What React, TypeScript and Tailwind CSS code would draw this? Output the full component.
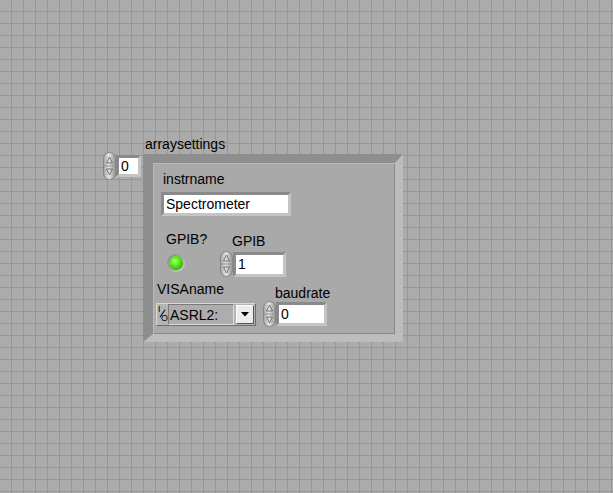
import type { ReactNode } from "react";

// LabVIEW-style front panel: an array of clusters with instrument settings.

const FONT = "font-['Liberation_Sans',Arial,sans-serif] text-[14px] leading-[16px] text-black";

function Spinner({ h = 26 }: { h?: number }) {
  const m = h / 2;
  return (
    <svg width={13} height={h} viewBox={`0 0 13 ${h}`} className="block shrink-0">
      <defs>
        <linearGradient id="spinfill" x1="0" x2="1" y1="0" y2="0">
          <stop offset="0" stopColor="#a0a0a0" />
          <stop offset="0.45" stopColor="#e6e6e6" />
          <stop offset="1" stopColor="#929292" />
        </linearGradient>
      </defs>
      <rect x="0.5" y="0.5" width="12" height={h - 1} rx="6" fill="url(#spinfill)" stroke="#858585" />
      <line x1="1.5" x2="11.5" y1={m} y2={m} stroke="#909090" />
      <path d={`M6.5 ${m - 9} L9.5 ${m - 3} L3.5 ${m - 3} Z`} fill="none" stroke="#727272" />
      <path d={`M6.5 ${m + 9} L9.5 ${m + 3} L3.5 ${m + 3} Z`} fill="none" stroke="#727272" />
    </svg>
  );
}

function Sunken({ className, children }: { className: string; children: ReactNode }) {
  return (
    <div
      className={`flex items-center border-[3px] border-t-[#8a8a8a] border-l-[#8a8a8a] border-r-[#c4c4c4] border-b-[#c4c4c4] bg-white pl-[2px] ${className}`}
    >
      <div className="w-full h-full bg-white flex items-center">{children}</div>
    </div>
  );
}

function Led() {
  return (
    <svg width={18} height={18} viewBox="0 0 18 18" className="block">
      <defs>
        <linearGradient id="ledring" x1="0" y1="0" x2="1" y2="1">
          <stop offset="0" stopColor="#808080" />
          <stop offset="1" stopColor="#d6d6d6" />
        </linearGradient>
        <radialGradient id="ledgreen" cx="0.42" cy="0.38" r="0.7">
          <stop offset="0" stopColor="#d4ffa8" />
          <stop offset="0.3" stopColor="#6cf52a" />
          <stop offset="1" stopColor="#2aa800" />
        </radialGradient>
      </defs>
      <circle cx="9" cy="9" r="9" fill="url(#ledring)" />
      <circle cx="9" cy="9" r="7.2" fill="url(#ledgreen)" />
    </svg>
  );
}

function VisaCombo() {
  return (
    <div className="flex items-stretch w-[100px] h-[23px] border border-t-[#d8d8d8] border-l-[#d8d8d8] border-r-[#6e6e6e] border-b-[#6e6e6e] bg-[#b4b4b4]">
      {/* I/O glyph */}
      <span className="relative w-[11px] shrink-0 font-['Liberation_Sans',Arial,sans-serif] text-[9px] leading-none">
        <span className="absolute left-[1px] top-[1px]">I</span>
        <span className="absolute left-[1px] top-[9px] w-[9px] border-t border-black rotate-[-55deg]" />
        <span className="absolute left-[4px] bottom-[2px]">O</span>
      </span>
      <div className="flex items-center flex-1 border border-t-[#7a7a7a] border-l-[#7a7a7a] border-r-[#dcdcdc] border-b-[#dcdcdc] bg-[#adadad] pl-[1px]">
        <span className={FONT}>ASRL2:</span>
      </div>
      <div className="flex items-center justify-center w-[18px] shrink-0 ml-[2px] my-[1px] mr-[1px] border border-t-[#ffffff] border-l-[#ffffff] border-r-[#555555] border-b-[#555555] bg-[#ececec]">
        <svg width={8} height={5} viewBox="0 0 8 5" className="block">
          <path d="M0 0 H8 L4 4.5 Z" fill="#000" />
        </svg>
      </div>
    </div>
  );
}

function ClusterBody() {
  return (
    <div className="flex flex-col pl-[3px] pt-[8px]">
      <div className={`${FONT} ml-[7px]`}>instrname</div>
      <Sunken className="ml-[5px] mt-[5px] w-[130px] h-[24px]">
        <span className={FONT}>Spectrometer</span>
      </Sunken>

      <div className="flex items-start mt-[15px]">
        <div className="flex flex-col ml-[10px] w-[40px]">
          <div className={FONT}>GPIB?</div>
          <div className="mt-[7px] ml-[1px]">
            <Led />
          </div>
        </div>
        <div className="flex flex-col ml-[14px] mt-[2px]">
          <div className={`${FONT} ml-[12px]`}>GPIB</div>
          <div className="flex items-center mt-[2px]">
            <Spinner h={26} />
            <Sunken className="w-[53px] h-[25px]">
              <span className={FONT}>1</span>
            </Sunken>
          </div>
        </div>
      </div>

      <div className="flex items-start mt-[4px]">
        <div className="flex flex-col w-[101px]">
          <div className={`${FONT} ml-[1px]`}>VISAname</div>
          <div className="mt-[6px]">
            <VisaCombo />
          </div>
        </div>
        <div className="flex flex-col ml-[6px] mt-[4px]">
          <div className={`${FONT} ml-[12px]`}>baudrate</div>
          <div className="flex items-center">
            <Spinner h={26} />
            <Sunken className="w-[51px] h-[24px]">
              <span className={FONT}>0</span>
            </Sunken>
          </div>
        </div>
      </div>
    </div>
  );
}

export default function App() {
  return (
    <div className="w-[613px] h-[493px] overflow-hidden bg-[#ababab] bg-[linear-gradient(to_right,#979797_1px,transparent_1px),linear-gradient(to_bottom,#979797_1px,transparent_1px)] bg-size-[12px_12px] bg-position-[11px_11px] pt-[136px] pl-[103px]">
      <div className="flex flex-col">
        <div className={`${FONT} ml-[42px] h-[16px]`}>arraysettings</div>
        <div className="flex items-start">
          {/* array index */}
          <div className="flex items-center h-[28px]">
            <Spinner h={28} />
            <Sunken className="w-[25px] h-[22px]">
              <span className={FONT}>0</span>
            </Sunken>
          </div>
          {/* array element frame */}
          <div className="ml-[2px] mt-[2px] w-[260px] h-[188px] border-t-[9px] border-l-[10px] border-r-[8px] border-b-[8px] border-t-[#8e8e8e] border-l-[#8e8e8e] border-r-[#bcbcbc] border-b-[#bcbcbc] bg-[#a9a9a9] shadow-[inset_1px_1px_0_#b9b9b9,inset_-1px_-1px_0_#8a8a8a]">
            <ClusterBody />
          </div>
        </div>
      </div>
    </div>
  );
}
